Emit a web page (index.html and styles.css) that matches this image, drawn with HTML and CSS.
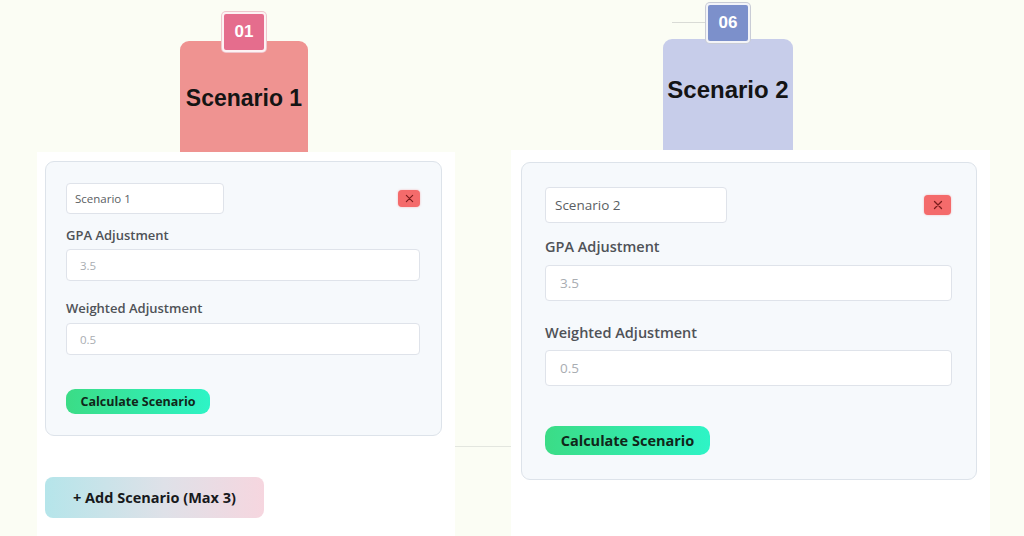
FILE: index.html
```html
<!DOCTYPE html>
<html lang="en">
<head>
<meta charset="utf-8">
<title>Scenarios</title>
<link rel="stylesheet" href="styles.css">
</head>
<body>
<div class="stage">
  <section class="col col-a">
    <div class="head">
      <div class="tab tab-a">
        <span class="badge badge-a">01</span>
        <h2 class="tab-title">Scenario 1</h2>
      </div>
    </div>
    <div class="panel">
      <div class="card card-a">
        <div class="name-row">
          <div class="field name">Scenario 1</div>
          <button class="remove" aria-label="Remove">
            <svg viewBox="0 0 10 10" width="9" height="9"><path d="M1.5 1.5 L8.5 8.5 M8.5 1.5 L1.5 8.5" stroke="#7a1c1c" stroke-width="1.3" stroke-linecap="round" fill="none"/></svg>
          </button>
        </div>
        <div class="label">GPA Adjustment</div>
        <div class="field num">3.5</div>
        <div class="label second">Weighted Adjustment</div>
        <div class="field num">0.5</div>
        <button class="calc">Calculate Scenario</button>
      </div>
      <button class="add">+ Add Scenario (Max 3)</button>
    </div>
  </section>

  <div class="gutter"><span class="rule"></span></div>

  <section class="col col-b">
    <div class="head">
      <span class="hair"></span>
      <div class="tab tab-b">
        <span class="badge badge-b">06</span>
        <h2 class="tab-title">Scenario 2</h2>
      </div>
    </div>
    <div class="panel">
      <div class="card card-b">
        <div class="name-row">
          <div class="field name">Scenario 2</div>
          <button class="remove" aria-label="Remove">
            <svg viewBox="0 0 10 10" width="10" height="10"><path d="M1.5 1.5 L8.5 8.5 M8.5 1.5 L1.5 8.5" stroke="#7a1c1c" stroke-width="1.3" stroke-linecap="round" fill="none"/></svg>
          </button>
        </div>
        <div class="label">GPA Adjustment</div>
        <div class="field num">3.5</div>
        <div class="label second">Weighted Adjustment</div>
        <div class="field num">0.5</div>
        <button class="calc">Calculate Scenario</button>
      </div>
    </div>
  </section>
</div>
</body>
</html>
```

FILE: styles.css
```css
* { box-sizing: border-box; }

html, body {
  margin: 0;
  padding: 0;
  height: 536px;
  overflow: hidden;
  background: #fbfdf4;
  font-family: "Open Sans", "Liberation Sans", sans-serif;
}

.stage {
  display: flex;
  align-items: stretch;
  height: 536px;
  padding-left: 37px;
}

.col { display: flex; flex-direction: column; }
.col-a { width: 418px; }
.col-b { width: 479px; }

.gutter {
  width: 56px;
  padding-top: 446px;
}
.rule {
  display: block;
  height: 1px;
  background: #e3e6df;
}

/* header with tab */
.head { position: relative; }
.col-a .head { height: 152px; padding: 41px 0 0 143px; }
.col-b .head { height: 150px; padding: 39px 0 0 152px; }

.tab {
  position: relative;
  height: 100%;
  border-radius: 9px 9px 0 0;
  display: flex;
  align-items: center;
  justify-content: center;
}
.tab-a { width: 128px; background: #ef9391; padding-top: 4px; }
.tab-b { width: 130px; background: #c7cdea; padding-bottom: 9px; }

.tab-title {
  margin: 0;
  font-family: "Liberation Sans", Arial, sans-serif;
  font-weight: 700;
  color: #141414;
  white-space: nowrap;
}
.tab-a .tab-title { font-size: 23px; }
.tab-b .tab-title { font-size: 24px; }

.badge {
  position: absolute;
  width: 44px;
  height: 40px;
  border-radius: 4px;
  border: 2px solid #fdf3f4;
  display: flex;
  align-items: center;
  justify-content: center;
  font-family: "Liberation Sans", Arial, sans-serif;
  font-weight: 700;
  font-size: 17px;
  color: #ffffff;
}
.badge-a {
  left: 42px;
  top: -29px;
  background: #e56d8d;
  box-shadow: 0 0 0 1px #efc6cd;
}
.badge-b {
  left: 43px;
  top: -36px;
  background: #7c90cb;
  border-color: #f3f4f8;
  box-shadow: 0 0 0 1px #c9ccd6;
}

.hair {
  position: absolute;
  left: 161px;
  top: 22px;
  width: 34px;
  height: 1px;
  background: #d9dbd6;
}

/* panel */
.panel {
  flex: 1;
  background: #ffffff;
  display: flex;
  flex-direction: column;
  align-items: flex-start;
}
.col-a .panel { padding: 9px 0 0 8px; }
.col-b .panel { padding: 12px 0 0 10px; }

.card {
  background: #f6f9fc;
  border: 1px solid #dde3ea;
  border-radius: 9px;
  display: flex;
  flex-direction: column;
  align-items: flex-start;
}
.card-a { width: 397px; padding: 21px 21px 21px 20px; }
.card-b { width: 456px; padding: 24px 24px 24px 23px; }

.name-row {
  width: 100%;
  display: flex;
  align-items: center;
  justify-content: space-between;
}

.field {
  background: #ffffff;
  border: 1px solid #dfe3ea;
  border-radius: 4px;
  display: flex;
  align-items: center;
  width: 100%;
  color: #a9adb2;
}
.field.name { color: #5a5e63; }

.card-a .field { height: 32px; padding-left: 8px; font-size: 11.5px; }
.card-a .field.name { width: 158px; height: 31px; }
.card-a .field.num { padding-left: 13px; }
.card-b .field { height: 36px; padding-left: 9px; font-size: 13.5px; }
.card-b .field.name { width: 182px; }
.card-b .field.num { padding-left: 14px; }

.remove {
  border: none;
  padding: 0;
  background: #f46b6b;
  border-radius: 4px;
  display: flex;
  align-items: center;
  justify-content: center;
  box-shadow: 0 0 2px rgba(244,107,107,.5);
}
.card-a .remove { width: 22px; height: 17px; }
.card-b .remove { width: 27px; height: 20px; margin-right: 1px; }

.label {
  font-weight: 600;
  color: #4f5257;
  white-space: nowrap;
}
.card-a .label { font-size: 13px; line-height: 20px; margin: 11px 0 4px; }
.card-a .label.second { margin: 17px 0 5px; }
.card-b .label { font-size: 14.5px; line-height: 22px; margin: 13px 0 7px; }
.card-b .label.second { margin: 21px 0 6px; }

.calc {
  border: none;
  background: linear-gradient(90deg, #3bdc86 0%, #2ef4c6 100%);
  font-family: "Open Sans", "Liberation Sans", sans-serif;
  font-weight: 700;
  color: #102619;
  padding: 0;
  white-space: nowrap;
}
.card-a .calc { width: 144px; height: 25px; border-radius: 9px; font-size: 12.5px; margin-top: 34px; }
.card-b .calc { width: 165px; height: 29px; border-radius: 10px; font-size: 14.5px; margin-top: 40px; }

.add {
  margin-top: 41px;
  width: 219px;
  height: 41px;
  border: none;
  border-radius: 8px;
  background: linear-gradient(90deg, #b5e5ea 0%, #dfe1e8 55%, #f6d6df 100%);
  font-family: "Open Sans", "Liberation Sans", sans-serif;
  font-weight: 700;
  font-size: 14.5px;
  color: #17191c;
  padding: 0;
}
```
